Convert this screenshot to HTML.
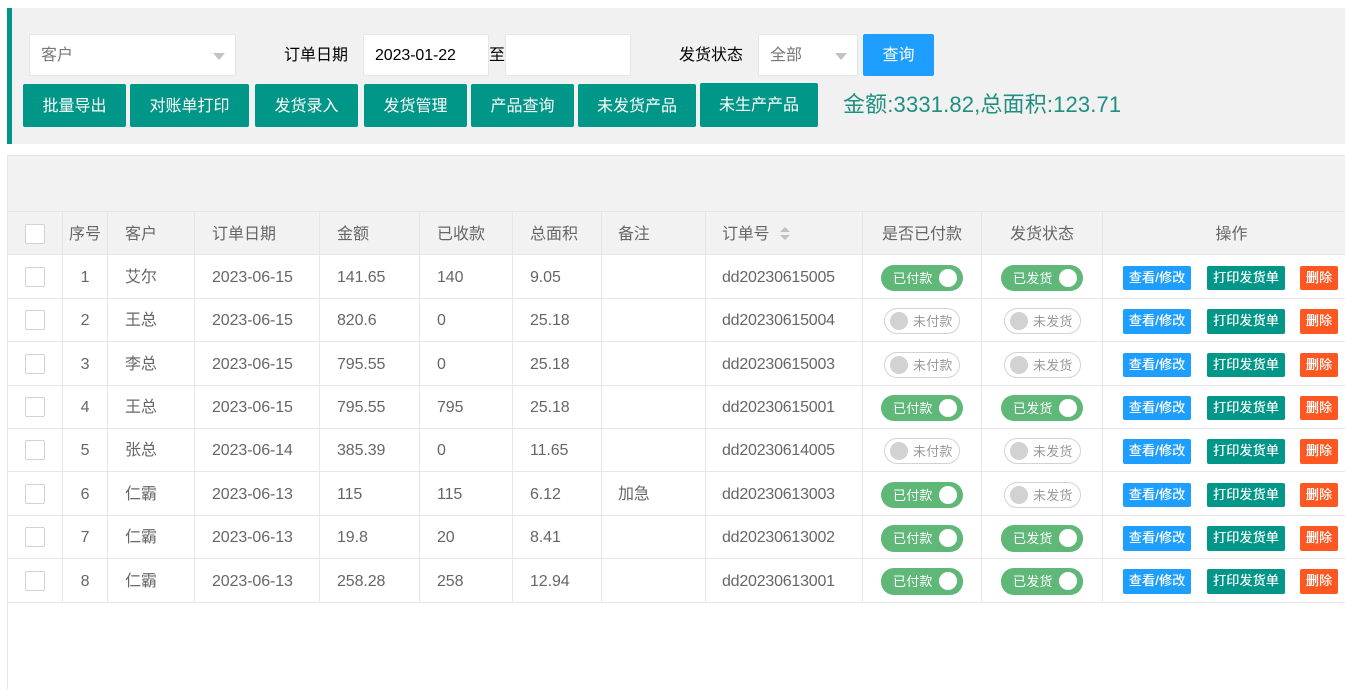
<!DOCTYPE html>
<html lang="zh-CN"><head><meta charset="utf-8"><title>订单</title>
<style>
*{box-sizing:border-box}
html,body{margin:0;padding:0;background:#fff;width:1345px;height:689px;overflow:hidden;position:relative;font-family:"Liberation Sans","Noto Sans CJK SC",sans-serif;font-size:16px;color:#666}
.a{position:absolute}
#bar{left:7px;top:8px;width:1338px;height:136px;background:#f1f1f1;border-left:5px solid #009688}
.box{position:absolute;top:34px;height:42px;background:#fff;border:1px solid #e6e6e6;border-radius:2px;line-height:42px;padding-left:11px}
.ph{color:#777}
.arr{position:absolute;top:18px;width:0;height:0;border:6px solid transparent;border-top:7px solid #c2c2c2;border-bottom:0}
.lab{position:absolute;top:34px;line-height:44px;color:#000}
.btn{position:absolute;height:43px;top:84px;background:#009688;color:#fff;border-radius:2px;text-align:center;line-height:45px}
#tot{left:843px;top:88px;font-size:22px;line-height:34px;color:#1f8f80;white-space:nowrap;letter-spacing:.15px}
#frame{left:7px;top:155px;width:1338px;height:534px;border-left:1px solid #e6e6e6;border-top:1px solid #e6e6e6}
#tool{left:8px;top:156px;width:1337px;height:56px;background:#f2f2f2;border-bottom:1px solid #e6e6e6}
table{position:absolute;left:8px;top:212px;border-collapse:separate;border-spacing:0;table-layout:fixed;width:1337px}
th,td{border-right:1px solid #e6e6e6;border-bottom:1px solid #e6e6e6;padding:2px 0 0 17px;font-weight:400;text-align:left;white-space:nowrap;overflow:hidden;color:#666;position:relative;line-height:20px;letter-spacing:-.1px}
th{background:#f2f2f2;letter-spacing:0;padding-top:4px}
td:last-child,th:last-child{border-right:0}
th.c,td.c{padding-left:0;text-align:center}
th.n,td.n{padding-left:16px;letter-spacing:-.22px}
.ck{display:block;position:relative;top:-1px;width:20px;height:20px;background:#fff;border:1px solid #d2d2d2;border-radius:2px}
th .ck{top:-1px}
.sw{position:absolute;display:block;height:26px;border-radius:13px;font-size:13px;line-height:27px;top:50%;margin-top:-12px;letter-spacing:.2px}
.on{left:18px;width:82px;background:#5fb878;color:#fff;padding-left:12px}
.on i{position:absolute;right:6px;top:4px;width:18px;height:18px;background:#fff;border-radius:50%}
.off{left:21px;width:76px;background:#fff;border:1px solid #d2d2d2;color:#999;padding-left:28px;line-height:25px}
.off i{position:absolute;left:5px;top:3px;width:18px;height:18px;background:#d2d2d2;border-radius:50%}
.s2 .on{left:19px}
.s2 .off{left:22px;width:77px}
.sb{position:absolute;top:50%;margin-top:-11px;height:24px;border-radius:2px;color:#fff;font-size:13px;line-height:23px;text-align:center;letter-spacing:.2px;text-shadow:.3px 0 0 #fff}
tr:nth-child(3) .sb,tr:nth-child(6) .sb,tr:nth-child(8) .sb{height:25px}
tr:nth-child(8) .sw{height:27px}
tr:nth-child(9) .sb{height:25px;margin-top:-12px;line-height:24px}
tr:nth-child(9) .sw{height:27px;margin-top:-13px;line-height:28px}
.b1{left:20px;width:68px;background:#1e9fff}
.b2{left:104px;width:78px;background:#009688}
.b3{left:197px;width:38px;background:#ff5722}
.sort{position:absolute;left:74px;top:15px}
</style></head><body>
<div id="bar" class="a"></div>
<div class="box ph" style="left:29px;width:207px">客户<span class="arr" style="left:183px"></span></div>
<div class="lab" style="left:284px">订单日期</div>
<div class="box" style="left:363px;width:126px;color:#000;line-height:41px;letter-spacing:-.1px">2023-01-22</div>
<div class="lab" style="left:489px">至</div>
<div class="box" style="left:505px;width:126px"></div>
<div class="lab" style="left:679px">发货状态</div>
<div class="box ph" style="left:758px;width:100px">全部<span class="arr" style="left:76px"></span></div>
<div class="btn" style="left:863px;top:34px;width:71px;height:42px;line-height:43px;background:#1e9fff">查询</div>
<div class="btn" style="left:23px;width:103px">批量导出</div>
<div class="btn" style="left:130px;width:119px">对账单打印</div>
<div class="btn" style="left:255px;width:103px">发货录入</div>
<div class="btn" style="left:364px;width:103px">发货管理</div>
<div class="btn" style="left:471px;width:103px">产品查询</div>
<div class="btn" style="left:578px;width:118px">未发货产品</div>
<div class="btn" style="left:700px;top:83px;height:44px;width:118px;line-height:46px">未生产产品</div>
<div id="tot" class="a">金额:3331.82,总面积:123.71</div>
<div id="frame" class="a"></div>
<div id="tool" class="a"></div>
<table>
<colgroup><col style="width:55px"><col style="width:45px"><col style="width:87px"><col style="width:125px"><col style="width:100px"><col style="width:93px"><col style="width:89px"><col style="width:104px"><col style="width:157px"><col style="width:119px"><col style="width:121px"><col style="width:242px"></colgroup>
<tr style="height:43px"><th><span class="ck"></span></th><th class="c">序号</th><th>客户</th><th>订单日期</th><th>金额</th><th>已收款</th><th>总面积</th><th class="n">备注</th><th class="n">订单号<svg class="sort" width="10" height="13" viewBox="0 0 10 13"><path d="M5 0L10 5H0Z M0 8H10L5 13Z" fill="#c2c2c2"/></svg></th><th class="c">是否已付款</th><th class="c">发货状态</th><th class="c" style="padding-left:15px">操作</th></tr>
<tr style="height:44px"><td><span class="ck"></span></td><td class="c">1</td><td>艾尔</td><td>2023-06-15</td><td>141.65</td><td>140</td><td>9.05</td><td class="n"></td><td class="n">dd20230615005</td><td><span class="sw on">已付款<i></i></span></td><td class="s2"><span class="sw on">已发货<i></i></span></td><td><span class="sb b1">查看/修改</span><span class="sb b2">打印发货单</span><span class="sb b3">删除</span></td></tr>
<tr style="height:43px"><td><span class="ck"></span></td><td class="c">2</td><td>王总</td><td>2023-06-15</td><td>820.6</td><td>0</td><td>25.18</td><td class="n"></td><td class="n">dd20230615004</td><td><span class="sw off"><i></i>未付款</span></td><td class="s2"><span class="sw off"><i></i>未发货</span></td><td><span class="sb b1">查看/修改</span><span class="sb b2">打印发货单</span><span class="sb b3">删除</span></td></tr>
<tr style="height:44px"><td><span class="ck"></span></td><td class="c">3</td><td>李总</td><td>2023-06-15</td><td>795.55</td><td>0</td><td>25.18</td><td class="n"></td><td class="n">dd20230615003</td><td><span class="sw off"><i></i>未付款</span></td><td class="s2"><span class="sw off"><i></i>未发货</span></td><td><span class="sb b1">查看/修改</span><span class="sb b2">打印发货单</span><span class="sb b3">删除</span></td></tr>
<tr style="height:43px"><td><span class="ck"></span></td><td class="c">4</td><td>王总</td><td>2023-06-15</td><td>795.55</td><td>795</td><td>25.18</td><td class="n"></td><td class="n">dd20230615001</td><td><span class="sw on">已付款<i></i></span></td><td class="s2"><span class="sw on">已发货<i></i></span></td><td><span class="sb b1">查看/修改</span><span class="sb b2">打印发货单</span><span class="sb b3">删除</span></td></tr>
<tr style="height:43px"><td><span class="ck"></span></td><td class="c">5</td><td>张总</td><td>2023-06-14</td><td>385.39</td><td>0</td><td>11.65</td><td class="n"></td><td class="n">dd20230614005</td><td><span class="sw off"><i></i>未付款</span></td><td class="s2"><span class="sw off"><i></i>未发货</span></td><td><span class="sb b1">查看/修改</span><span class="sb b2">打印发货单</span><span class="sb b3">删除</span></td></tr>
<tr style="height:44px"><td><span class="ck"></span></td><td class="c">6</td><td>仁霸</td><td>2023-06-13</td><td>115</td><td>115</td><td>6.12</td><td class="n">加急</td><td class="n">dd20230613003</td><td><span class="sw on">已付款<i></i></span></td><td class="s2"><span class="sw off"><i></i>未发货</span></td><td><span class="sb b1">查看/修改</span><span class="sb b2">打印发货单</span><span class="sb b3">删除</span></td></tr>
<tr style="height:43px"><td><span class="ck"></span></td><td class="c">7</td><td>仁霸</td><td>2023-06-13</td><td>19.8</td><td>20</td><td>8.41</td><td class="n"></td><td class="n">dd20230613002</td><td><span class="sw on">已付款<i></i></span></td><td class="s2"><span class="sw on">已发货<i></i></span></td><td><span class="sb b1">查看/修改</span><span class="sb b2">打印发货单</span><span class="sb b3">删除</span></td></tr>
<tr style="height:44px"><td><span class="ck"></span></td><td class="c">8</td><td>仁霸</td><td>2023-06-13</td><td>258.28</td><td>258</td><td>12.94</td><td class="n"></td><td class="n">dd20230613001</td><td><span class="sw on">已付款<i></i></span></td><td class="s2"><span class="sw on">已发货<i></i></span></td><td><span class="sb b1">查看/修改</span><span class="sb b2">打印发货单</span><span class="sb b3">删除</span></td></tr>
</table>
</body></html>
